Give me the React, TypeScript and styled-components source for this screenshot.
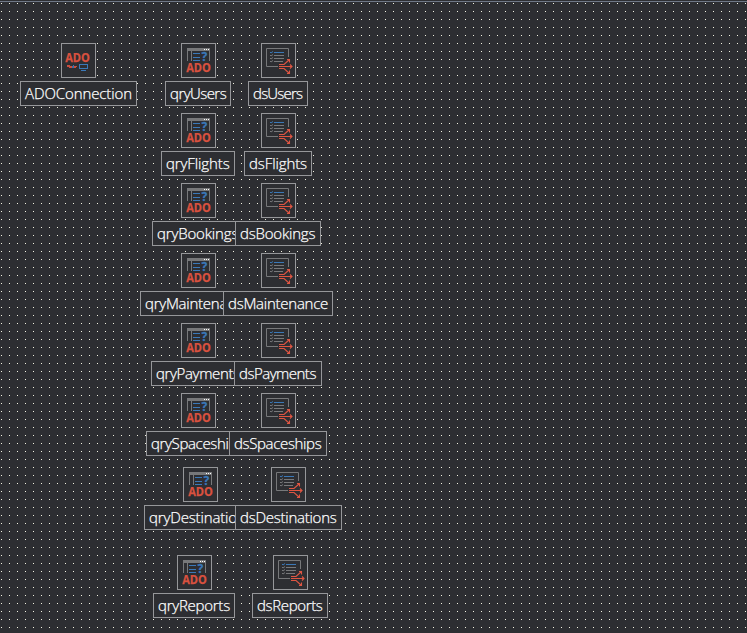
import React from "react";
import styled, { createGlobalStyle } from "styled-components";

const GlobalStyle = createGlobalStyle`
  html, body { margin: 0; background: #2d2e32; overflow: hidden; }
`;

const Designer = styled.main`
  position: relative;
  box-sizing: border-box;
  width: 747px;
  height: 633px;
  overflow: hidden;
  background-color: #2d2e32;
  background-image:
    linear-gradient(#6f7887, #6f7887),
    conic-gradient(from 0deg at 1px 1px, transparent 270deg, #f4f4e2 0);
  background-size: 100% 1px, 8px 8px;
  background-position: 0 1px, 1px 3px;
  background-repeat: no-repeat, repeat;
`;

const IconBox = styled.div<{ $x: number; $y: number }>`
  position: absolute;
  left: ${(p) => p.$x}px;
  top: ${(p) => p.$y}px;
  box-sizing: border-box;
  width: 35px;
  height: 35px;
  border: 1px solid #96979a;
  background: #2d2e32;

  svg {
    display: block;
    margin: -1px;
  }
`;

const Caption = styled.div<{ $x: number; $y: number; $w: number }>`
  position: absolute;
  left: ${(p) => p.$x}px;
  top: ${(p) => p.$y}px;
  box-sizing: border-box;
  width: ${(p) => p.$w}px;
  height: 25px;
  padding-left: 4px;
  border: 1px solid #96979a;
  background: #2d2e32;
  color: #fff;
  font: 300 15px/23px "Open Sans", "Noto Sans", sans-serif;
  -webkit-text-stroke: 0.25px #fff;
  white-space: nowrap;
`;

const CaptionText = styled.span<{ $spacing: number }>`
  letter-spacing: ${(p) => p.$spacing}px;
`;

const AdoText = styled.text`
  font: 700 11.5px "Open Sans", "Noto Sans", sans-serif;
  fill: #d9513f;
  stroke: #d9513f;
  stroke-width: 0.25px;
`;

const MarkText = styled.text`
  font: 700 12px "Open Sans", "Noto Sans", sans-serif;
  fill: #3a78b8;
  stroke: #3a78b8;
  stroke-width: 0.3px;
`;

function ConnectionIcon() {
  return (
    <svg width="35" height="35" viewBox="0 0 35 35">
      <AdoText x="4.2" y="18.6" textLength="24.600" lengthAdjust="spacingAndGlyphs">ADO</AdoText>
      <g shapeRendering="crispEdges">
        <path d="M6 22h3v1h2v2H8v-1H6zM13 23h3v1h-1v1h-2z" fill="#c84e3f" />
        <path d="M11 23h1v2h-1zM12 22h1v3h-1z" fill="#3a70a8" />
        <path d="M18.5 21.5h8v4h-8zM20 27h5" fill="none" stroke="#3a78b8" />
      </g>
    </svg>
  );
}

function QueryIcon() {
  return (
    <svg width="35" height="35" viewBox="0 0 35 35">
      <g shapeRendering="crispEdges">
        <path d="M6 5h23v3H6zM6 8h1v10H6zM10 8h1v10h-1zM28 8h1v10h-1z" fill="#77787a" />
        <path d="M23 6h1v1h-1zM25 6h1v1h-1zM27 6h1v1h-1z" fill="#fff" />
        <path d="M12 10h7v1h-7zM12 14h7v1h-7zM12 17h7v1h-7z" fill="#3a78b8" />
      </g>
      <MarkText x="20.6" y="18.2">?</MarkText>
      <AdoText x="5.2" y="29.100" textLength="24.600" lengthAdjust="spacingAndGlyphs">ADO</AdoText>
    </svg>
  );
}

function SourceIcon() {
  return (
    <svg width="35" height="35" viewBox="0 0 35 35" fill="none">
      <path d="M17 23.5H5.5v-18h22V14" stroke="#77787a" />
      <path d="M13 12.5h10M13 15.5h10M13 18.5h9M9 12l1 1 2-1.500M9 15l1 1 2-1.500M9 18l1 1 2-1.500" stroke="#77787a" />
      <path d="M13 9.500h10M9 9l1 1 2-1.500" stroke="#3a78b8" />
      <path d="M18 21.500h5l5.500-5M18 23.500h13M18 25.500h5l5.500 5M26 16.500h2.500v3M26 30.500h2.500v-3M29 21.500l2 2-2 2" stroke="#df5542" strokeWidth="1.100" />
    </svg>
  );
}

type Kind = "connection" | "query" | "source";

interface Item {
  kind: Kind;
  name: string;
  icon: [number, number];
  label: [number, number];
  width: number;
  spacing: number;
}

const icons: Record<Kind, () => React.JSX.Element> = {
  connection: ConnectionIcon,
  query: QueryIcon,
  source: SourceIcon,
};

const items: Item[] = [
  { kind: "connection", name: "ADOConnection", icon: [61, 43], label: [20, 81], width: 117, spacing: -0.1 },
  { kind: "query", name: "qryUsers", icon: [181, 43], label: [165, 81], width: 66, spacing: -0.55 },
  { kind: "source", name: "dsUsers", icon: [261, 43], label: [248, 81], width: 60, spacing: -0.8 },
  { kind: "query", name: "qryFlights", icon: [181, 113], label: [161, 151], width: 74, spacing: -0.1 },
  { kind: "source", name: "dsFlights", icon: [261, 113], label: [244, 151], width: 68, spacing: -0.1 },
  { kind: "query", name: "qryBookings", icon: [181, 183], label: [152, 221], width: 93, spacing: -0.15 },
  { kind: "source", name: "dsBookings", icon: [261, 183], label: [235, 221], width: 86, spacing: -0.2 },
  { kind: "query", name: "qryMaintenance", icon: [181, 253], label: [140, 291], width: 117, spacing: -0.25 },
  { kind: "source", name: "dsMaintenance", icon: [261, 253], label: [223, 291], width: 110, spacing: -0.25 },
  { kind: "query", name: "qryPayments", icon: [181, 323], label: [151, 361], width: 95, spacing: -0.35 },
  { kind: "source", name: "dsPayments", icon: [261, 323], label: [234, 361], width: 88, spacing: -0.5 },
  { kind: "query", name: "qrySpaceships", icon: [181, 393], label: [146, 431], width: 105, spacing: -0.35 },
  { kind: "source", name: "dsSpaceships", icon: [261, 393], label: [229, 431], width: 98, spacing: -0.35 },
  { kind: "query", name: "qryDestinations", icon: [183, 467], label: [144, 505], width: 113, spacing: -0.15 },
  { kind: "source", name: "dsDestinations", icon: [271, 467], label: [235, 505], width: 107, spacing: -0.25 },
  { kind: "query", name: "qryReports", icon: [177, 555], label: [153, 593], width: 82, spacing: -0.25 },
  { kind: "source", name: "dsReports", icon: [273, 555], label: [252, 593], width: 76, spacing: -0.35 },
];

export default function App() {
  return (
    <>
      <GlobalStyle />
      <Designer>
        {items.map((item) => {
          const Icon = icons[item.kind];
          return (
            <React.Fragment key={item.name}>
              <IconBox $x={item.icon[0]} $y={item.icon[1]}>
                <Icon />
              </IconBox>
              <Caption $x={item.label[0]} $y={item.label[1]} $w={item.width}>
                <CaptionText $spacing={item.spacing}>{item.name}</CaptionText>
              </Caption>
            </React.Fragment>
          );
        })}
      </Designer>
    </>
  );
}
